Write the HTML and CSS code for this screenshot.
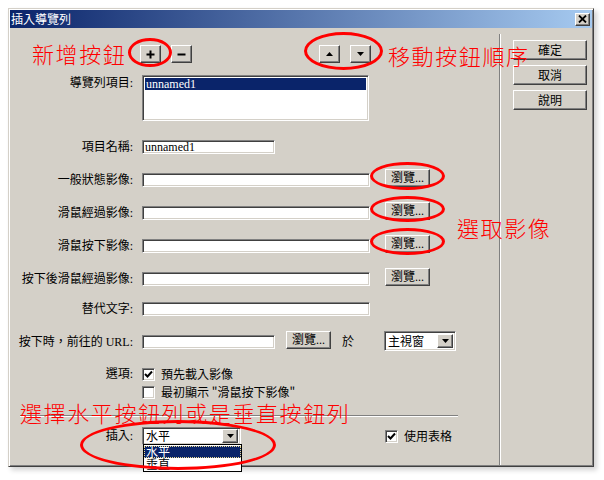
FILE: index.html
```html
<!DOCTYPE html>
<html lang="zh-Hant">
<head>
    <meta charset="UTF-8">
    <title>插入導覽列</title>
    <link rel="stylesheet" href="styles.css">
</head>
<body>
<div class="page">
    <div class="dialog">
        <div class="titlebar">
            <span>插入導覽列</span>
            <span class="btn close-btn">
                <svg width="9" height="8" viewBox="0 0 9 8"><path d="M1 0.5 L8 7.5 M8 0.5 L1 7.5" stroke="#000" stroke-width="1.8"/></svg>
            </span>
        </div>
        <div class="body">
            <div class="main">
                <!-- add / remove / move -->
                <div class="toolbar">
                    <span class="btn tool">
                        <svg width="9" height="9" viewBox="0 0 9 9"><path d="M4.5 0.5 V8.5 M0.5 4.5 H8.5" stroke="#000" stroke-width="2"/></svg>
                    </span>
                    <span class="btn tool">
                        <svg width="9" height="9" viewBox="0 0 9 9"><path d="M0.5 4.5 H8.5" stroke="#000" stroke-width="2"/></svg>
                    </span>
                    <span class="btn tool tool-move">
                        <svg width="7" height="4" viewBox="0 0 7 4"><path d="M3.5 0 L7 4 L0 4 Z" fill="#000"/></svg>
                    </span>
                    <span class="btn tool">
                        <svg width="7" height="4" viewBox="0 0 7 4"><path d="M0 0 L7 0 L3.5 4 Z" fill="#000"/></svg>
                    </span>
                </div>

                <div class="list-row">
                    <span class="lbl">導覽列項目:</span>
                    <div class="sunken listbox">
                        <div class="list-item selected">unnamed1</div>
                    </div>
                </div>

                <div class="row">
                    <span class="lbl">項目名稱:</span>
                    <input class="sunken field field-short" type="text" value="unnamed1">
                </div>
                <div class="row">
                    <span class="lbl">一般狀態影像:</span>
                    <input class="sunken field" type="text">
                    <span class="btn browse">瀏覽...</span>
                </div>
                <div class="row">
                    <span class="lbl">滑鼠經過影像:</span>
                    <input class="sunken field" type="text">
                    <span class="btn browse">瀏覽...</span>
                </div>
                <div class="row">
                    <span class="lbl">滑鼠按下影像:</span>
                    <input class="sunken field" type="text">
                    <span class="btn browse">瀏覽...</span>
                </div>
                <div class="row">
                    <span class="lbl">按下後滑鼠經過影像:</span>
                    <input class="sunken field" type="text">
                    <span class="btn browse">瀏覽...</span>
                </div>
                <div class="row row-short">
                    <span class="lbl">替代文字:</span>
                    <input class="sunken field" type="text">
                </div>
                <div class="row">
                    <span class="lbl">按下時，前往的 URL:</span>
                    <input class="sunken field field-short" type="text">
                    <span class="btn browse browse-url">瀏覽...</span>
                    <span class="in-text">於</span>
                    <div class="sunken combo combo-target">
                        <span class="combo-text">主視窗</span>
                        <span class="btn combo-arrow">
                            <svg width="7" height="4" viewBox="0 0 7 4"><path d="M0 0 L7 0 L3.5 4 Z" fill="#000"/></svg>
                        </span>
                    </div>
                </div>
                <div class="row row-opt">
                    <span class="lbl">選項:</span>
                    <span class="sunken check">
                        <svg width="9" height="9" viewBox="0 0 9 9"><path d="M1 4 L3.5 6.5 L8 1.5" fill="none" stroke="#000" stroke-width="2"/></svg>
                    </span>
                    <span class="check-text">預先載入影像</span>
                </div>
                <div class="row row-opt2">
                    <span class="lbl"></span>
                    <span class="sunken check"></span>
                    <span class="check-text">最初顯示 "滑鼠按下影像"</span>
                </div>

                <div class="hr"></div>

                <div class="insert-row">
                    <span class="lbl">插入:</span>
                    <div class="sunken combo combo-insert">
                        <span class="combo-text">水平</span>
                        <span class="btn combo-arrow">
                            <svg width="7" height="4" viewBox="0 0 7 4"><path d="M0 0 L7 0 L3.5 4 Z" fill="#000"/></svg>
                        </span>
                        <div class="dropdown">
                            <div class="drop-item selected">水平</div>
                            <div class="drop-item">垂直</div>
                        </div>
                    </div>
                    <span class="sunken check check-table">
                        <svg width="9" height="9" viewBox="0 0 9 9"><path d="M1 4 L3.5 6.5 L8 1.5" fill="none" stroke="#000" stroke-width="2"/></svg>
                    </span>
                    <span class="check-text">使用表格</span>
                </div>
            </div>
            <div class="vsep"></div>
            <div class="side">
                <span class="btn side-btn">確定</span>
                <span class="btn side-btn">取消</span>
                <span class="btn side-btn">說明</span>
            </div>
        </div>
    </div>

    <!-- red notes drawn over the screenshot -->
    <div class="note note-add">新增按鈕</div>
    <div class="note note-move">移動按鈕順序</div>
    <div class="note note-image">選取影像</div>
    <div class="note note-insert">選擇水平按鈕列或是垂直按鈕列</div>
    <div class="ring ring-add"></div>
    <div class="ring ring-move"></div>
    <div class="ring ring-b1"></div>
    <div class="ring ring-b2"></div>
    <div class="ring ring-b3"></div>
    <div class="ring ring-insert"></div>
</div>
</body>
</html>
```

FILE: styles.css
```css
body {
    margin: 0;
    background: #fff;
    font-family: "Liberation Serif", "Noto Sans CJK TC", serif;
    font-size: 12px;
    color: #000;
}
.page {
    position: relative;
    width: 604px;
    height: 480px;
    padding: 8px 0 0 8px;
    box-sizing: border-box;
    overflow: hidden;
}
.dialog {
    width: 586px;
    height: 459px;
    box-sizing: border-box;
    padding: 1px;
    background: #d4d0c8;
    border: 1px solid;
    border-color: #d4d0c8 #404040 #404040 #d4d0c8;
    box-shadow: inset 1px 1px #fff, inset -1px -1px #808080, 3px 3px 5px rgba(0, 0, 0, 0.18);
    display: flex;
    flex-direction: column;
}
.titlebar {
    height: 18px;
    flex-shrink: 0;
    display: flex;
    align-items: center;
    justify-content: space-between;
    padding: 0 2px 0 1px;
    background: linear-gradient(to right, #0a246a, #a6caf0);
    color: #fff;
    font-family: "Noto Sans CJK TC", sans-serif;
    line-height: 18px;
}

/* classic raised button */
.btn {
    display: flex;
    align-items: center;
    justify-content: center;
    box-sizing: border-box;
    background: #d4d0c8;
    border: 1px solid;
    border-color: #fff #404040 #404040 #fff;
    box-shadow: inset -1px -1px #808080;
    line-height: 12px;
    flex-shrink: 0;
}
.close-btn { width: 15px; height: 13px; }

/* classic sunken field */
.sunken {
    box-sizing: border-box;
    background: #fff;
    border: 1px solid;
    border-color: #808080 #fff #fff #808080;
    box-shadow: inset 1px 1px #404040, inset -1px -1px #d4d0c8;
}

.body { flex: 1; display: flex; }
.main { width: 489px; flex-shrink: 0; }
.vsep {
    width: 0;
    margin-top: 6px;
    border-left: 1px solid #808080;
    border-right: 1px solid #fff;
}
.side {
    padding: 12px 0 0 12px;
    display: flex;
    flex-direction: column;
    gap: 5px;
}
.side-btn {
    width: 74px;
    height: 20px;
    font-family: "Noto Sans CJK TC", sans-serif;
}

.toolbar {
    display: flex;
    height: 18px;
    margin: 17px 0 0 130px;
}
.tool { width: 21px; height: 18px; margin-right: 10px; }
.tool-move { margin-left: 117px; }

.lbl {
    width: 123px;
    flex-shrink: 0;
    margin-right: 9px;
    text-align: right;
    line-height: 14px;
    white-space: nowrap;
}
.list-row { display: flex; margin-top: 12px; }
.list-row .lbl { padding-top: 1px; }
.listbox { width: 227px; height: 46px; padding: 2px; }
.list-item { height: 12px; line-height: 12px; padding-left: 1px; }
.selected { background: #0a246a; color: #fff; }

.row {
    display: flex;
    align-items: flex-end;
    height: 33px;
}
.row-short { height: 30px; }
.row-opt { height: 32px; }
.row-opt2 { height: 18px; }

.field {
    width: 228px;
    height: 14px;
    margin: 0;
    padding: 0 2px;
    font: 12px/10px "Liberation Serif", "Noto Sans CJK TC", serif;
    outline: none;
}
.field-short { width: 133px; }
.browse { width: 45px; height: 18px; margin-left: 15px; }
.browse-url { margin-left: 11px; }
.in-text { margin-left: 11px; line-height: 14px; }

.combo {
    position: relative;
    display: flex;
    align-items: center;
    justify-content: space-between;
    padding: 2px;
    font-family: "Noto Sans CJK TC", sans-serif;
}
.combo-target { width: 72px; height: 20px; margin: 0 0 -2px 30px; }
.combo-text { padding-left: 1px; line-height: 14px; }
.combo-arrow { width: 16px; height: 14px; }

.check {
    width: 13px;
    height: 13px;
    display: flex;
    align-items: center;
    justify-content: center;
}
.check-text { margin-left: 6px; line-height: 14px; font-family: "Noto Sans CJK TC", sans-serif; }

.hr {
    margin: 16px 41px 0 10px;
    border-top: 1px solid #808080;
    border-bottom: 1px solid #fff;
}
.insert-row {
    display: flex;
    align-items: center;
    height: 18px;
    margin-top: 10px;
}
.combo-insert { width: 99px; height: 18px; }
.check-table { margin-left: 144px; }
.dropdown {
    position: absolute;
    left: 0;
    top: 100%;
    width: 99px;
    box-sizing: border-box;
    background: #fff;
    border: 1px solid #000;
    padding: 1px 0;
}
.drop-item { height: 12px; line-height: 12px; padding-left: 2px; }
.drop-item.selected { outline: 1px dotted #e8d890; outline-offset: -1px; }

.note {
    position: absolute;
    color: #f00;
    font-family: "Noto Sans CJK TC", sans-serif;
    font-weight: 300;
    font-size: 22px;
    line-height: 22px;
    letter-spacing: 1.6px;
    white-space: nowrap;
}
.note-add { left: 32px; top: 42px; }
.note-move { left: 388px; top: 44px; }
.note-image { left: 457px; top: 216px; }
.note-insert { left: 20px; top: 401px; }

.ring {
    position: absolute;
    box-sizing: border-box;
    border: 3px solid #f00;
    border-radius: 50%;
}
.ring-add { left: 128px; top: 38px; width: 44px; height: 29px; }
.ring-move { left: 304px; top: 32px; width: 79px; height: 38px; }
.ring-b1 { left: 370px; top: 162px; width: 75px; height: 28px; }
.ring-b2 { left: 370px; top: 196px; width: 75px; height: 26px; }
.ring-b3 { left: 370px; top: 228px; width: 75px; height: 27px; }
.ring-insert { left: 80px; top: 420px; width: 196px; height: 50px; }
```
